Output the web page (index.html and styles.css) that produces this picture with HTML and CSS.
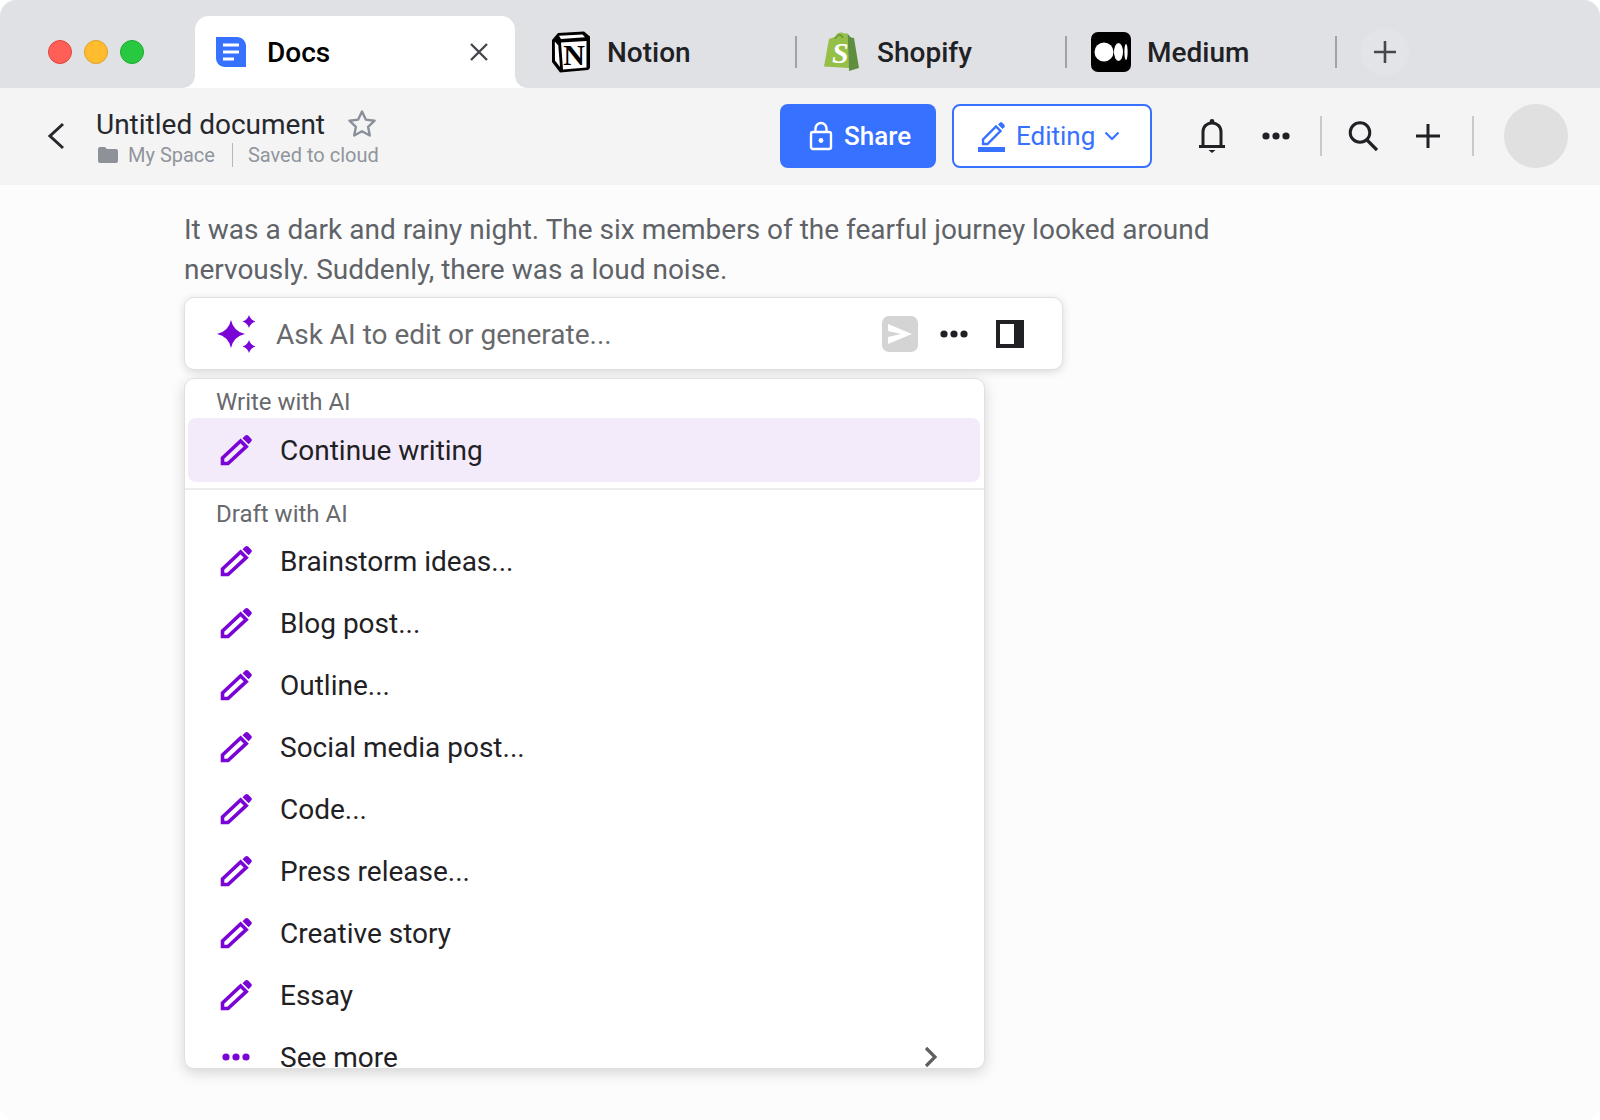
FILE: index.html
```html
<!DOCTYPE html>
<html lang="en">
<head>
<meta charset="UTF-8">
<title>Docs</title>
<link rel="stylesheet" href="styles.css">
</head>
<body>
<svg class="defs" width="0" height="0">
    <symbol id="pencil" viewBox="0 0 32 32">
        <path d="M2.500 29.500V24L20.600 7L26.200 12.600L8 29.500Z" fill="none" stroke="currentColor" stroke-width="3.600"/>
        <path d="M22.500 4.200L25 1.800A2.400 2.400 0 0 1 28.400 1.800L31 4.400A2.400 2.400 0 0 1 31 7.800L28.600 10.300Z" fill="currentColor"/>
    </symbol>
    <symbol id="dots" viewBox="0 0 28 8">
        <circle cx="4" cy="4" r="3.600" fill="currentColor"/>
        <circle cx="14" cy="4" r="3.600" fill="currentColor"/>
        <circle cx="24" cy="4" r="3.600" fill="currentColor"/>
    </symbol>
</svg>

<div class="window">
    <div class="tabbar">
        <div class="lights">
            <span class="light red"></span>
            <span class="light yellow"></span>
            <span class="light green"></span>
        </div>
        <div class="tab active">
            <svg class="tab-icon" width="32" height="32" viewBox="0 0 32 32">
                <path d="M1 1H22C27 1 31 5 31 10V31H10C5 31 1 27 1 22Z" fill="#3671ff"/>
                <path d="M8 9H24M8 16H24M8 23H19" stroke="#fff" stroke-width="3" fill="none"/>
            </svg>
            <span class="tab-name">Docs</span>
            <svg class="tab-close" width="20" height="20" viewBox="0 0 20 20">
                <path d="M2 2L18 18M18 2L2 18" stroke="#44474c" stroke-width="2.400" fill="none"/>
            </svg>
        </div>
        <div class="tab">
            <svg class="tab-icon" width="40" height="42" viewBox="0 0 40 42">
                <path d="M1 9L7 2L33 0.500L39 5.500V37L37 39L9 41.500L1 31Z" fill="#000"/>
                <path d="M10 11.500L35.500 10V36.500L12 38.500Z" fill="#fff"/>
                <path d="M3.800 10.500L7.300 14.500L9 36L4 29.500Z" fill="#fff"/>
                <path d="M8 4.800L31.500 3.400L34 6.300L10 8Z" fill="#fff"/>
                <text x="23" y="34" class="notion-n">N</text>
            </svg>
            <span class="tab-name">Notion</span>
        </div>
        <div class="tab tab-shopify">
            <svg class="tab-icon" width="36" height="40" viewBox="0 0 36 40">
                <path d="M1 34.500L6 7L12 5C14 0.500 18 -0.500 21 1.500L24.500 1.500L26 36Z" fill="#95bf47"/>
                <path d="M24.500 1.800L28 5.500L31 6L36 36L26 39Z" fill="#5e8e3e"/>
                <path d="M12 5C12 8 13 4 16 3C18 2.500 19 4 20 6" fill="none" stroke="#5e8e3e" stroke-width="1.200"/>
                <text x="9" y="31" class="shopify-s">S</text>
            </svg>
            <span class="tab-name">Shopify</span>
        </div>
        <div class="tab">
            <svg class="tab-icon" width="40" height="40" viewBox="0 0 40 40">
                <rect width="40" height="40" rx="7" fill="#000"/>
                <circle cx="13" cy="20" r="9.500" fill="#fff"/>
                <ellipse cx="27.500" cy="20" rx="4.500" ry="9" fill="#fff"/>
                <ellipse cx="35" cy="20" rx="1.600" ry="8" fill="#fff"/>
            </svg>
            <span class="tab-name">Medium</span>
        </div>
        <div class="newtab">
            <svg width="24" height="24" viewBox="0 0 24 24">
                <path d="M12 1V23M1 12H23" stroke="#44474c" stroke-width="2.600" fill="none"/>
            </svg>
        </div>
    </div>

    <div class="toolbar">
        <svg class="back" width="18" height="28" viewBox="0 0 18 28">
            <path d="M16 2L3 14L16 26" stroke="#26282d" stroke-width="3" fill="none"/>
        </svg>
        <div class="doc-info">
            <div class="doc-title">
                <span>Untitled document</span>
                <svg class="star" width="30" height="30" viewBox="0 0 30 30">
                    <path d="M15 2.500L18.800 10.600L27.600 11.700L21.100 17.800L22.800 26.500L15 22.200L7.200 26.500L8.900 17.800L2.400 11.700L11.200 10.600Z" fill="none" stroke="#8a9099" stroke-width="2.400" stroke-linejoin="round"/>
                </svg>
            </div>
            <div class="doc-meta">
                <svg width="20" height="16" viewBox="0 0 20 16">
                    <path d="M0 2A2 2 0 0 1 2 0H7L9 2H18A2 2 0 0 1 20 4V14A2 2 0 0 1 18 16H2A2 2 0 0 1 0 14Z" fill="#8d9299"/>
                </svg>
                <span>My Space</span>
                <span class="meta-sep"></span>
                <span>Saved to cloud</span>
            </div>
        </div>
        <button class="btn-share">
            <svg width="24" height="30" viewBox="0 0 24 30">
                <rect x="2" y="11" width="20" height="17" rx="2" fill="none" stroke="#fff" stroke-width="2.400"/>
                <path d="M6.500 11V7.500A5.500 5.500 0 0 1 17.500 7.500V11" fill="none" stroke="#fff" stroke-width="2.400"/>
                <circle cx="12" cy="19.500" r="2.400" fill="#fff"/>
            </svg>
            Share
        </button>
        <button class="btn-edit">
            <svg width="28" height="32" viewBox="0 0 28 32">
                <path d="M5 24V19.500L18 6.500L22.500 11L9.500 24Z" fill="none" stroke="#3671ff" stroke-width="2.400"/>
                <path d="M20 4.500L21.800 2.700A1.800 1.800 0 0 1 24.300 2.700L26.300 4.700A1.800 1.800 0 0 1 26.300 7.200L24.500 9Z" fill="#3671ff"/>
                <rect y="27" width="27" height="5" fill="#3671ff"/>
            </svg>
            Editing
            <svg class="caret" width="16" height="10" viewBox="0 0 16 10">
                <path d="M1.500 1.500L8 8L14.500 1.500" stroke="#3671ff" stroke-width="2.200" fill="none"/>
            </svg>
        </button>
        <div class="tools">
            <svg width="28" height="36" viewBox="0 0 28 36">
                <path d="M5 28V14C5 8.500 9 5 14 5C19 5 23 8.500 23 14V28" fill="none" stroke="#1f2125" stroke-width="3"/>
                <path d="M1 28.500H27" stroke="#1f2125" stroke-width="3"/>
                <circle cx="14" cy="3.500" r="2.400" fill="#1f2125"/>
                <path d="M10.500 32H17.500L14 35Z" fill="#1f2125"/>
            </svg>
            <svg class="tool-dots" width="28" height="8"><use href="#dots"/></svg>
            <span class="tool-sep"></span>
            <svg class="tool-search" width="30" height="32" viewBox="0 0 30 32">
                <circle cx="12" cy="12.500" r="9.800" fill="none" stroke="#1f2125" stroke-width="3"/>
                <path d="M19 20L29 30" stroke="#1f2125" stroke-width="3.200" fill="none"/>
            </svg>
            <svg class="tool-plus" width="24" height="24" viewBox="0 0 24 24">
                <path d="M12 0V24M0 12H24" stroke="#1f2125" stroke-width="3" fill="none"/>
            </svg>
            <span class="tool-sep"></span>
        </div>
        <div class="avatar"></div>
    </div>

    <div class="page">
        <p class="doc-text">It was a dark and rainy night. The six members of the fearful journey looked around nervously. Suddenly, there was a loud noise.</p>
        <div class="ask">
            <svg width="40" height="38" viewBox="0 0 40 38">
                <path d="M14 5Q16.500 16.500 28 19Q16.500 21.500 14 33Q11.500 21.500 0 19Q11.500 16.500 14 5Z" fill="#7a04d6"/>
                <path d="M32 0Q33.300 4.700 38.500 6.500Q33.300 8.300 32 13Q30.700 8.300 25.500 6.500Q30.700 4.700 32 0Z" fill="#7a04d6"/>
                <path d="M32 25Q33.300 29.700 38.500 31.500Q33.300 33.300 32 38Q30.700 33.300 25.500 31.500Q30.700 29.700 32 25Z" fill="#7a04d6"/>
            </svg>
            <span class="ask-text">Ask AI to edit or generate...</span>
            <span class="send">
                <svg width="24" height="20" viewBox="0 0 24 20">
                    <path d="M0 0L24 10L0 20V13L13 10L0 7Z" fill="#fff"/>
                </svg>
            </span>
            <svg class="ask-dots" width="28" height="8"><use href="#dots"/></svg>
            <span class="panel"></span>
        </div>
        <div class="menu">
            <div class="menu-head first">Write with AI</div>
            <div class="menu-row current"><svg class="row-icon"><use href="#pencil"/></svg>Continue writing</div>
            <div class="menu-line"></div>
            <div class="menu-head">Draft with AI</div>
            <div class="menu-row"><svg class="row-icon"><use href="#pencil"/></svg>Brainstorm ideas...</div>
            <div class="menu-row"><svg class="row-icon"><use href="#pencil"/></svg>Blog post...</div>
            <div class="menu-row"><svg class="row-icon"><use href="#pencil"/></svg>Outline...</div>
            <div class="menu-row"><svg class="row-icon"><use href="#pencil"/></svg>Social media post...</div>
            <div class="menu-row"><svg class="row-icon"><use href="#pencil"/></svg>Code...</div>
            <div class="menu-row"><svg class="row-icon"><use href="#pencil"/></svg>Press release...</div>
            <div class="menu-row"><svg class="row-icon"><use href="#pencil"/></svg>Creative story</div>
            <div class="menu-row"><svg class="row-icon"><use href="#pencil"/></svg>Essay</div>
            <div class="menu-row">
                <svg class="row-dots" width="28" height="8"><use href="#dots"/></svg>See more
                <svg class="row-arrow" width="14" height="22" viewBox="0 0 14 22">
                    <path d="M2 2L11 11L2 20" stroke="#5f6063" stroke-width="3.200" fill="none"/>
                </svg>
            </div>
        </div>
    </div>
</div>
</body>
</html>
```

FILE: styles.css
```css
*{margin:0;padding:0;box-sizing:border-box;}
body{background:#fff;font-family:Roboto,"Liberation Sans",sans-serif;}
.defs{position:absolute;}
.window{width:1600px;height:1120px;display:flex;flex-direction:column;border-radius:16px;overflow:hidden;background:#fcfcfc;}

/* tabs */
.tabbar{height:88px;flex:none;background:#e0e1e5;display:flex;align-items:flex-end;}
.lights{width:195px;height:72px;flex:none;display:flex;align-items:center;gap:12px;padding-left:48px;}
.light{width:24px;height:24px;border-radius:50%;border:1.5px solid;}
.red{background:#ff5f57;border-color:#e0443e;}
.yellow{background:#febc2e;border-color:#dea123;}
.green{background:#28c840;border-color:#1aab29;}
.tab{width:270px;height:72px;flex:none;display:flex;align-items:center;padding-left:24px;gap:16px;position:relative;font-size:28px;font-weight:500;color:#1f2125;}
.tab:not(.active)::after{content:"";position:absolute;right:0;top:20px;width:2px;height:32px;background:#a0a2a6;}
.tab.active{width:320px;background:#fff;border-radius:14px 14px 0 0;color:#000;padding-left:20px;gap:20px;}
.tab.active::before,.tab.active::after{content:"";position:absolute;bottom:0;width:12px;height:12px;}
.tab.active::before{left:-12px;background:radial-gradient(circle at 0 0,transparent 11.500px,#fff 12px);}
.tab.active::after{right:-12px;background:radial-gradient(circle at 100% 0,transparent 11.500px,#fff 12px);}
.tab-icon{flex:none;}
.tab-close{margin-left:auto;margin-right:26px;}
.tab.active + .tab{width:282px;padding-left:36px;}
.tab-shopify{padding-left:26px;gap:18px;}
.notion-n{font-family:"Liberation Serif",serif;font-weight:700;font-size:30px;text-anchor:middle;fill:#000;}
.shopify-s{font-family:"Liberation Serif",serif;font-weight:700;font-style:italic;font-size:30px;fill:#fff;}
.newtab{width:48px;height:48px;flex:none;margin:0 0 12px 24px;border-radius:50%;background:#e3e4e8;display:flex;align-items:center;justify-content:center;}

/* toolbar */
.toolbar{height:97px;flex:none;background:#f4f4f5;display:flex;align-items:center;padding:0 0 2px 47px;}
.back{flex:none;margin-right:31px;}
.doc-info{width:684px;flex:none;padding-top:6px;}
.doc-title{display:flex;align-items:center;gap:22px;font-size:28px;line-height:32px;color:#26282d;}
.star{margin-top:-2px;}
.doc-meta{display:flex;align-items:center;font-size:20px;line-height:28px;color:#90959c;margin-left:2px;}
.doc-meta span:first-of-type{margin-left:10px;}
.meta-sep{width:1px;height:24px;background:#b4b7bb;margin:0 15px 0 17px;}
.btn-share,.btn-edit{height:64px;border-radius:8px;font-family:inherit;font-size:26px;display:flex;align-items:center;flex:none;}
.btn-share{width:156px;background:#3671ff;color:#fff;border:none;font-weight:500;padding-left:29px;gap:11px;}
.btn-edit{width:200px;margin-left:16px;background:#fff;color:#3671ff;border:2px solid #3671ff;padding-left:24px;gap:10px;}
.caret{margin-left:-1px;}
.tools{display:flex;align-items:center;margin-left:46px;flex:none;}
.tool-dots{margin-left:36px;color:#1f2125;}
.tool-sep{width:2px;height:40px;background:#c8c9cb;margin-left:30px;}
.tool-search{margin-left:26px;}
.tool-plus{margin-left:38px;}
.tools .tool-plus + .tool-sep{margin-left:32px;}
.avatar{width:64px;height:64px;border-radius:50%;background:#e0e0e0;margin-left:30px;flex:none;}

/* page */
.page{flex:1;padding:25px 0 0 184px;}
.doc-text{width:1060px;font-size:28px;line-height:40px;color:#5f6368;}
.ask{width:879px;height:73px;margin-top:7px;background:#fff;border:1px solid #e0e0e0;border-radius:10px;box-shadow:0 2px 8px rgba(0,0,0,.14);display:flex;align-items:center;padding-left:32px;}
.ask-text{flex:1;margin-left:19px;padding-top:2px;font-size:28px;color:#68696c;}
.send{width:36px;height:36px;border-radius:7px;background:#d4d4d4;display:flex;align-items:center;justify-content:center;}
.ask-dots{margin-left:22px;color:#1f2125;}
.panel{width:28px;height:28px;margin:0 38px 0 28px;background:#fff;border:solid #1f2125;border-width:4px 10px 4px 4px;}
.menu{width:801px;height:691px;margin-top:8px;background:#fff;border:1px solid #e0e0e0;border-radius:10px;box-shadow:0 4px 14px rgba(0,0,0,.16);overflow:hidden;padding:0 4px 0 3px;}
.menu-head{height:36px;padding-left:28px;font-size:24px;line-height:40px;color:#68696c;}
.menu-head.first{height:39px;line-height:46px;}
.menu-row{height:62px;display:flex;align-items:center;padding-left:32px;font-size:28px;color:#1f2125;position:relative;}
.menu-row.current{height:64px;background:#f3ebfa;border-radius:8px;}
.menu-line{height:2px;background:#ececec;margin:6px -4px 4px -3px;}
.row-icon{width:32px;height:32px;flex:none;margin-right:28px;color:#7a04d6;}
.row-dots{flex:none;margin:0 30px 0 2px;color:#7a04d6;}
.row-arrow{margin-left:auto;margin-right:42px;}
```
